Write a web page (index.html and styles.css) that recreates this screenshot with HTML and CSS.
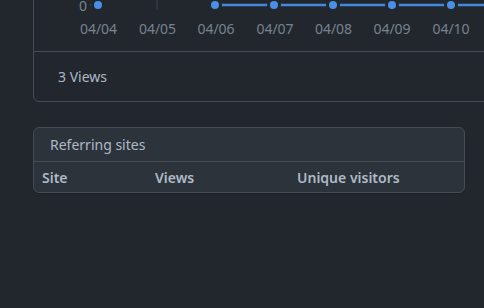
FILE: index.html
```html
<!DOCTYPE html>
<html>
<head>
<meta charset="utf-8">
<link rel="stylesheet" href="styles.css">
</head>
<body>
<div class="page">
  <section class="box traffic">
    <div class="chart">
      <svg class="chart-svg" width="450" height="70" viewBox="34 -19 450 70">
        <line x1="157" y1="-19" x2="157" y2="10" class="grid"/>
        <text x="87" y="11" class="axis" text-anchor="end">0</text>
        <circle cx="91.5" cy="5" r="0.9" class="green"/>
        <line x1="215" y1="5" x2="490" y2="5" class="series"/>
        <circle cx="98" cy="5" r="5.5" class="dot"/>
        <circle cx="215" cy="5" r="5.5" class="dot"/>
        <circle cx="274" cy="5" r="5.5" class="dot"/>
        <circle cx="333" cy="5" r="5.5" class="dot"/>
        <circle cx="392" cy="5" r="5.5" class="dot"/>
        <circle cx="451" cy="5" r="5.5" class="dot"/>
        <text x="98.5" y="34" class="axis" text-anchor="middle">04/04</text>
        <text x="157.5" y="34" class="axis" text-anchor="middle">04/05</text>
        <text x="216" y="34" class="axis" text-anchor="middle">04/06</text>
        <text x="275" y="34" class="axis" text-anchor="middle">04/07</text>
        <text x="333.5" y="34" class="axis" text-anchor="middle">04/08</text>
        <text x="392" y="34" class="axis" text-anchor="middle">04/09</text>
        <text x="451" y="34" class="axis" text-anchor="middle">04/10</text>
      </svg>
    </div>
    <div class="summary">3 Views</div>
  </section>

  <section class="box referrers">
    <div class="box-header">Referring sites</div>
    <div class="table-head">
      <div class="th">Site</div>
      <div class="th">Views</div>
      <div class="th">Unique visitors</div>
    </div>
  </section>
</div>
</body>
</html>
```

FILE: styles.css
```css
html, body {
  margin: 0;
  padding: 0;
  background: #22272e;
  overflow: hidden;
  height: 100%;
}

body {
  font-family: "Noto Sans", "Liberation Sans", sans-serif;
  font-size: 14px;
  color: #adbac7;
}

.page {
  padding-left: 33px;
}

.box {
  border: 1px solid #444c56;
  border-radius: 6px;
  box-sizing: border-box;
}

.traffic {
  margin-top: -20px;
  width: 480px;
  background: #22272e;
}

.chart {
  height: 70px;
  border-bottom: 1px solid #444c56;
}

.chart-svg {
  display: block;
  overflow: visible;
}

.grid {
  stroke: #3d444e;
  stroke-width: 1;
}

.axis {
  fill: #768390;
  font-family: "Noto Sans", "Liberation Sans", sans-serif;
  font-size: 14px;
}

.green {
  fill: #57ab5a;
}

.series {
  stroke: #4189dd;
  stroke-width: 2.5;
}

.dot {
  fill: #4a8fe7;
  stroke: #22272e;
  stroke-width: 3;
}

.summary {
  height: 49px;
  display: flex;
  align-items: center;
  padding-left: 24px;
  color: #adbac7;
}

.referrers {
  margin-top: 25px;
  width: 432px;
  background: #2d333b;
  box-shadow: 0 1px 0 #1c2128;
}

.box-header {
  height: 33px;
  display: flex;
  align-items: center;
  padding-left: 16px;
  border-bottom: 1px solid #444c56;
  color: #adbac7;
}

.table-head {
  display: grid;
  grid-template-columns: 113px 142px 1fr;
  height: 30px;
  align-items: center;
}

.th {
  padding-left: 8px;
  font-weight: 600;
  color: #adbac7;
}
```
